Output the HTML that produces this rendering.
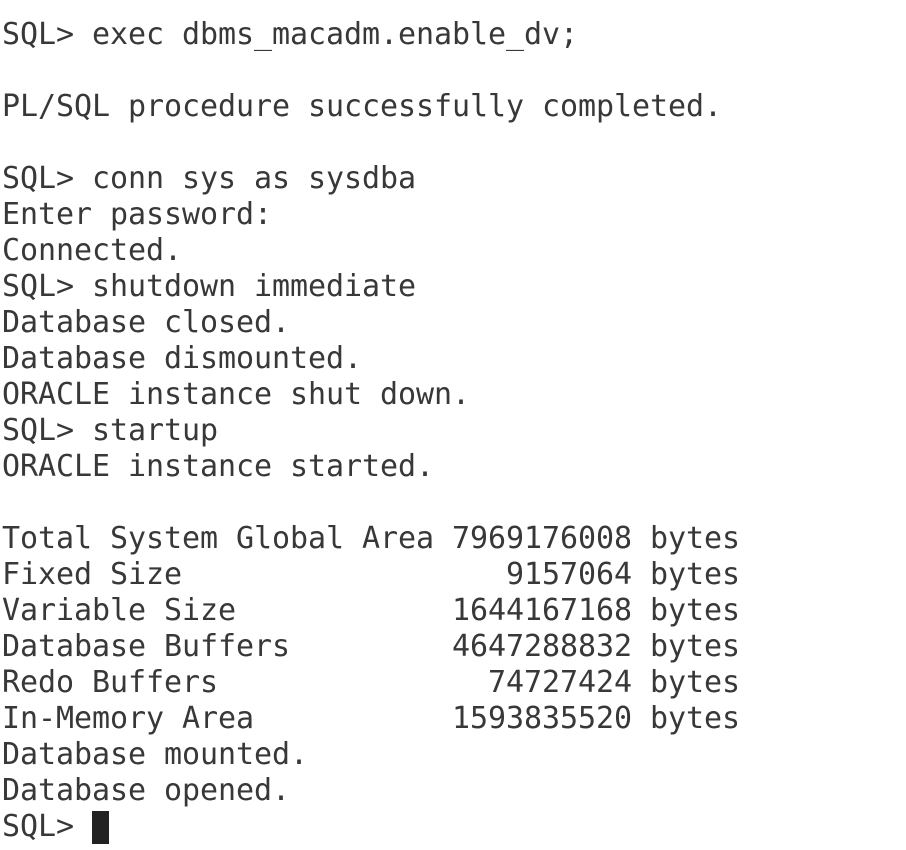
<!DOCTYPE html>
<html><head><meta charset="utf-8"><style>
html,body{margin:0;padding:0;background:#fff;width:906px;height:850px;overflow:hidden}
pre{margin:0;padding:17px 0 0 2px;font-family:"DejaVu Sans Mono","Liberation Mono",monospace;font-size:30px;line-height:36px;color:#383838;letter-spacing:-0.06px}
.c{display:inline-block;width:17px;height:33px;background:#222;vertical-align:-8px}
</style></head><body><pre>SQL&gt; exec dbms_macadm.enable_dv;

PL/SQL procedure successfully completed.

SQL&gt; conn sys as sysdba
Enter password:
Connected.
SQL&gt; shutdown immediate
Database closed.
Database dismounted.
ORACLE instance shut down.
SQL&gt; startup
ORACLE instance started.

Total System Global Area 7969176008 bytes
Fixed Size                  9157064 bytes
Variable Size            1644167168 bytes
Database Buffers         4647288832 bytes
Redo Buffers               74727424 bytes
In-Memory Area           1593835520 bytes
Database mounted.
Database opened.
SQL&gt; <span class="c"></span></pre></body></html>
